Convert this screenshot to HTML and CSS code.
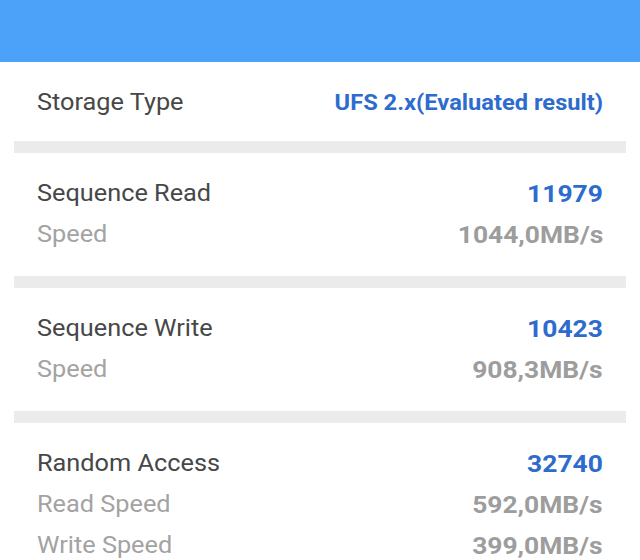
FILE: index.html
```html
<!DOCTYPE html>
<html>
<head>
<meta charset="utf-8">
<link rel="stylesheet" href="styles.css">
</head>
<body>
<div class="header"></div>
<div class="row storage">
  <span class="label">Storage Type</span>
  <span class="value blue small">UFS 2.x(Evaluated result)</span>
</div>
<div class="band"></div>
<div class="section">
  <div class="line"><span class="label">Sequence Read</span><span class="value blue">11979</span></div>
  <div class="line"><span class="label sub">Speed</span><span class="value gray">1044,0MB/s</span></div>
</div>
<div class="band"></div>
<div class="section">
  <div class="line"><span class="label">Sequence Write</span><span class="value blue">10423</span></div>
  <div class="line"><span class="label sub">Speed</span><span class="value gray">908,3MB/s</span></div>
</div>
<div class="band"></div>
<div class="section">
  <div class="line"><span class="label">Random Access</span><span class="value blue">32740</span></div>
  <div class="line"><span class="label sub">Read Speed</span><span class="value gray">592,0MB/s</span></div>
  <div class="line"><span class="label sub">Write Speed</span><span class="value gray">399,0MB/s</span></div>
</div>
</body>
</html>
```
FILE: styles.css
```css
html, body {
  margin: 0;
  padding: 0;
  background: #ffffff;
  font-family: Roboto, "Liberation Sans", sans-serif;
}
body {
  width: 640px;
  height: 560px;
  overflow: hidden;
}
.header {
  height: 62px;
  background: #4ca1f9;
}
.row, .line {
  display: flex;
  justify-content: space-between;
  align-items: center;
  height: 41px;
  padding: 0 37px;
}
.storage {
  margin: 20px 0 18px;
}
.section {
  padding: 20px 0 21px;
}
.band {
  height: 12px;
  margin: 0 14px;
  background: #ebebeb;
}
.label {
  display: inline-block;
  font-size: 23px;
  color: #474747;
  transform: scaleX(1.1);
  transform-origin: left center;
}
.label.sub {
  color: #a3a3a3;
}
.value {
  display: inline-block;
  font-size: 24px;
  font-weight: 700;
  transform: scaleX(1.1);
  transform-origin: right center;
}
.value.small {
  font-size: 21.5px;
}
.blue {
  color: #2d6ccc;
}
.gray {
  color: #9d9d9d;
}
```
